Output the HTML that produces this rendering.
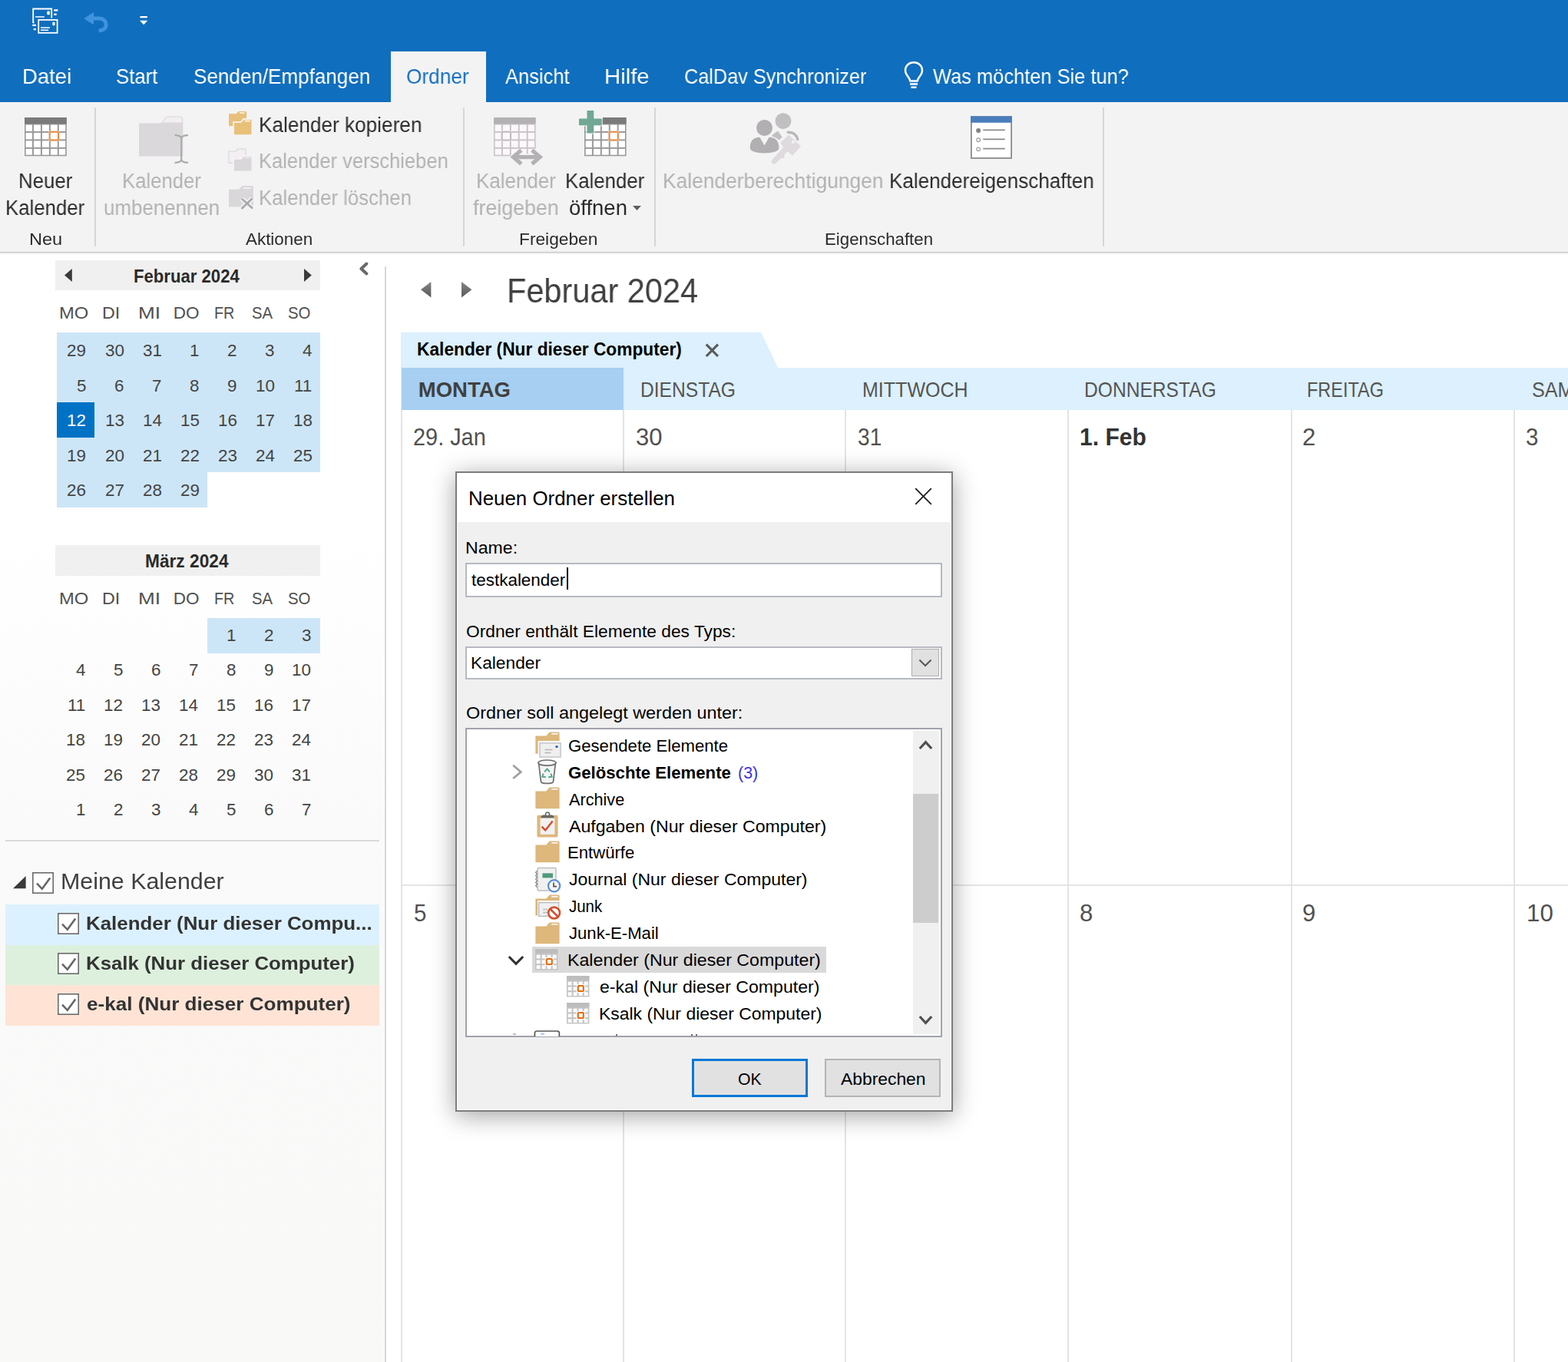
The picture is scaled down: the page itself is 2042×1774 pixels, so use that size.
<!DOCTYPE html>
<html lang="de">
<head>
<meta charset="utf-8">
<title>Kalender - Outlook</title>
<style>
html,body{margin:0;padding:0;}
body{width:2042px;height:1774px;overflow:hidden;position:relative;background:#fff;
 font-family:"Liberation Sans",sans-serif;-webkit-font-smoothing:antialiased;}
.b{position:absolute;display:block;overflow:visible;}
.t{position:absolute;white-space:nowrap;transform-origin:0 0;font-kerning:normal;}
.g{will-change:transform;}
</style>
</head>
<body>
<header id="titlebar" aria-label="Outlook Titelleiste und Registerkarten">
<div class="b" style="left:0px;top:0px;width:2042px;height:133px;background:#106EBE;"></div>
<svg class="b" style="left:42px;top:10px;" width="35" height="34" viewBox="0 0 35 34"><g fill="none" stroke="#fff" stroke-width="1.8"><path d="M2.6 19.4 H1.2 V1.5 H25.2 V13.6"/><rect x="8.2" y="15.9" width="24.4" height="16.9" fill="#106EBE"/></g><g fill="#fff"><rect x="19.3" y="4.6" width="3.5" height="4.6" rx="0.8"/><rect x="3.9" y="11.2" width="12" height="1.5"/><rect x="28.1" y="2.3" width="5.4" height="2.3" rx="0.6"/><rect x="28.1" y="7.6" width="3.6" height="2.3" rx="0.6"/><rect x="26.4" y="18.7" width="3.1" height="4.6" rx="0.8"/><rect x="10.9" y="25.3" width="12" height="1.5"/><rect x="10.9" y="28.5" width="10.2" height="1.5"/><rect x="0.3" y="21.7" width="4.6" height="2.3" rx="0.6"/><rect x="1.7" y="27" width="3.2" height="2.3" rx="0.6"/></g></svg>
<svg class="b" style="left:108.8px;top:15.6px;" width="32" height="27" viewBox="0 0 32 27"><path d="M0 8.2 L13 0 V5.2 L12.4 5.6 H19 C27.5 5.6 31.6 10.6 31.6 16.2 C31.6 22.6 26.6 26 19.6 26.2 V21.4 C24 21.2 26.6 19.6 26.6 16 C26.6 12.6 24 10.6 19 10.6 H12.6 L13 10.9 V16.2 Z" fill="#3F93DE"/></svg>
<svg class="b" style="left:181.7px;top:20.7px;" width="11" height="12" viewBox="0 0 11 12"><rect x="0.4" y="0" width="9.4" height="2.3" fill="#fff"/><path d="M0 5.8h10.2L5.1 11.3z" fill="#fff"/></svg>
<div class="b" style="left:508.5px;top:66.5px;width:124.3px;height:67px;background:#F3F3F3;"></div>
<span class="t g" style="left:29.13px;top:83.70px;font-size:28px;line-height:31px;color:#FFFFFF;transform:scaleX(0.9807);">Datei</span>
<span class="t g" style="left:150.64px;top:83.70px;font-size:28px;line-height:31px;color:#FFFFFF;transform:scaleX(0.9189);">Start</span>
<span class="t g" style="left:252.13px;top:83.70px;font-size:28px;line-height:31px;color:#FFFFFF;transform:scaleX(0.9300);">Senden/Empfangen</span>
<span class="t g" style="left:528.65px;top:83.70px;font-size:28px;line-height:31px;color:#1971C2;transform:scaleX(0.9379);">Ordner</span>
<span class="t g" style="left:657.74px;top:83.70px;font-size:28px;line-height:31px;color:#FFFFFF;transform:scaleX(0.9109);">Ansicht</span>
<span class="t g" style="left:786.98px;top:83.70px;font-size:28px;line-height:31px;color:#FFFFFF;transform:scaleX(1.0476);">Hilfe</span>
<span class="t g" style="left:891.34px;top:83.70px;font-size:28px;line-height:31px;color:#FFFFFF;transform:scaleX(0.9029);">CalDav Synchronizer</span>
<span class="t g" style="left:1215.07px;top:83.70px;font-size:28px;line-height:31px;color:#FFFFFF;transform:scaleX(0.9084);">Was möchten Sie tun?</span>
<svg class="b" style="left:1177px;top:80px;" width="26" height="36" viewBox="0 0 26 36"><g fill="none" stroke="#fff" stroke-width="2.5"><path d="M8.2 25.5 C8.2 21 2 18.5 2 11.5 C2 5.5 7 1.3 13 1.3 C19 1.3 24 5.5 24 11.5 C24 18.5 17.8 21 17.8 25.5 Z" stroke-linejoin="round"/><path d="M8 29.6h10M9.5 33.8h7"/></g></svg>
<div class="b" style="left:0px;top:133px;width:2042px;height:194.5px;background:#F3F3F3;"></div>
<div class="b" style="left:0px;top:327px;width:2042px;height:1px;background:#EBEBEB;"></div>
<div class="b" style="left:0px;top:328px;width:2042px;height:2px;background:#D6D6D6;"></div>
<div class="b" style="left:123px;top:140px;width:2px;height:181px;background:#D6D6D6;"></div>
<div class="b" style="left:603px;top:140px;width:2px;height:181px;background:#D6D6D6;"></div>
<div class="b" style="left:852px;top:140px;width:2px;height:181px;background:#D6D6D6;"></div>
<div class="b" style="left:1436px;top:140px;width:2px;height:181px;background:#D6D6D6;"></div>
<svg class="b" style="left:31.5px;top:152.9px;" width="54.8" height="50.3" viewBox="0 0 54.8 50.3"><rect x="0" y="0" width="54.8" height="50.3" fill="#9A9A9A"/><rect x="0" y="0" width="54.8" height="8.5" fill="#7A7A7A"/><rect x="1.60" y="9.50" width="8.36" height="8.45" fill="#FFFFFF"/><rect x="11.96" y="9.50" width="8.96" height="8.45" fill="#FFFFFF"/><rect x="22.92" y="9.50" width="8.96" height="8.45" fill="#FFFFFF"/><rect x="33.88" y="9.50" width="8.96" height="8.45" fill="#FFFFFF"/><rect x="44.84" y="9.50" width="8.36" height="8.45" fill="#FFFFFF"/><rect x="1.60" y="19.95" width="8.36" height="8.45" fill="#FFFFFF"/><rect x="11.96" y="19.95" width="8.96" height="8.45" fill="#FFFFFF"/><rect x="22.92" y="19.95" width="8.96" height="8.45" fill="#FFFFFF"/><rect x="33.88" y="19.95" width="8.96" height="8.45" fill="#FFFFFF"/><rect x="44.84" y="19.95" width="8.36" height="8.45" fill="#FFFFFF"/><rect x="1.60" y="30.40" width="8.36" height="8.45" fill="#FFFFFF"/><rect x="11.96" y="30.40" width="8.96" height="8.45" fill="#FFFFFF"/><rect x="22.92" y="30.40" width="8.96" height="8.45" fill="#FFFFFF"/><rect x="33.88" y="30.40" width="8.96" height="8.45" fill="#FFFFFF"/><rect x="44.84" y="30.40" width="8.36" height="8.45" fill="#FFFFFF"/><rect x="1.60" y="40.85" width="8.36" height="7.85" fill="#FFFFFF"/><rect x="11.96" y="40.85" width="8.96" height="7.85" fill="#FFFFFF"/><rect x="22.92" y="40.85" width="8.96" height="7.85" fill="#FFFFFF"/><rect x="33.88" y="40.85" width="8.96" height="7.85" fill="#FFFFFF"/><rect x="44.84" y="40.85" width="8.36" height="7.85" fill="#FFFFFF"/><rect x="31.68" y="17.75" width="13.36" height="12.85" fill="#FFFFFF"/><rect x="32.68" y="18.75" width="11.36" height="10.85" rx="1.5" fill="none" stroke="#E8873A" stroke-width="2"/></svg>
<span class="t g" style="left:23.97px;top:221.20px;font-size:27px;line-height:30px;color:#2B2B2B;transform:scaleX(0.9566);">Neuer</span>
<span class="t g" style="left:6.77px;top:256.20px;font-size:27px;line-height:30px;color:#2B2B2B;transform:scaleX(0.9551);">Kalender</span>
<span class="t g" style="left:37.86px;top:298.80px;font-size:22px;line-height:25px;color:#2B2B2B;transform:scaleX(1.0709);">Neu</span>
</header>
<nav id="ribbon" aria-label="Menüband Ordner">
<svg class="b" style="left:180.7px;top:150.6px;" width="57.3" height="52.4" viewBox="0 0 57.3 52.4"><path d="M0 9.4 H28.4 L36.4 0.4 H54 Q57.3 0.4 57.3 3.6 V52.4 H0 Z" fill="#DBD8DB"/><path d="M30.6 8.6 L37 1.6 H53.6 Q56 1.6 56 4 V8.6 Z" fill="#F3EEF3"/></svg>
<svg class="b" style="left:226.8px;top:174.6px;" width="18.5" height="38" viewBox="0 0 18.5 38"><g fill="none" stroke="#ABABAB" stroke-width="2.2"><path d="M9.2 3 V35"/><path d="M0.5 1.2 C5 1.2 8 2 9.2 4.5 C10.4 2 13.4 1.2 18 1.2"/><path d="M0.5 36.8 C5 36.8 8 36 9.2 33.5 C10.4 36 13.4 36.8 18 36.8"/></g></svg>
<span class="t g" style="left:159.08px;top:221.20px;font-size:27px;line-height:30px;color:#B2B2B2;transform:scaleX(0.9522);">Kalender</span>
<span class="t g" style="left:134.82px;top:256.20px;font-size:27px;line-height:30px;color:#B2B2B2;transform:scaleX(0.9593);">umbenennen</span>
<svg class="b" style="left:297.8px;top:145.4px;" width="23.1" height="19.2" viewBox="0 0 23.1 19.2"><path d="M0 3.26 H9.54 L12.47 0 H21.60 Q23.10 0 23.10 1.5 V19.20 H0 Z" fill="#E9C07A"/><rect x="13.67" y="1.37" width="7.03" height="1.37" rx="0.8" fill="#FFFFFF" opacity="0.85"/></svg>
<svg class="b" style="left:304.2px;top:154.7px;" width="24.4" height="21.2" viewBox="0 0 24.4 21.2"><path d="M0 4.03 H9.55 L13.18 0 H22.90 Q24.40 0 24.40 1.5 V21.20 H0 Z" fill="#E9C07A" stroke="#F3F3F3" stroke-width="1.8"/><rect x="14.38" y="1.69" width="7.62" height="1.69" rx="0.8" fill="#FFFFFF" opacity="0.85"/></svg>
<span class="t g" style="left:336.64px;top:147.60px;font-size:27px;line-height:30px;color:#2B2B2B;transform:scaleX(0.9694);">Kalender kopieren</span>
<svg class="b" style="left:298.4px;top:193.6px;" width="22.2" height="18.2" viewBox="0 0 22.2 18.2"><path d="M0 3.09 H9.20 L11.99 0 H20.70 Q22.20 0 22.20 1.5 V18.20 H0 Z" fill="#F4EFF4" stroke="#DEDADE" stroke-width="1.4"/></svg>
<svg class="b" style="left:304.2px;top:202.5px;" width="24.4" height="20.4" viewBox="0 0 24.4 20.4"><path d="M0 3.88 H9.69 L13.18 0 H22.90 Q24.40 0 24.40 1.5 V20.40 H0 Z" fill="#DAD7DA" stroke="#F3F3F3" stroke-width="1.8"/><rect x="14.38" y="1.63" width="7.62" height="1.63" rx="0.8" fill="#F1EDF1" opacity="0.85"/></svg>
<span class="t g" style="left:336.70px;top:195.00px;font-size:27px;line-height:30px;color:#B2B2B2;transform:scaleX(0.9446);">Kalender verschieben</span>
<svg class="b" style="left:297.8px;top:242.2px;" width="31.9" height="27.6" viewBox="0 0 31.9 27.6"><path d="M0 4.69 H13.00 L17.23 0 H30.40 Q31.90 0 31.90 1.5 V27.60 H0 Z" fill="#DAD7DA"/><rect x="18.43" y="1.97" width="11.07" height="1.97" rx="0.8" fill="#F4F0F4" opacity="0.85"/></svg>
<svg class="b" style="left:312.6px;top:257px;" width="18" height="16.5" viewBox="0 0 18 16.5"><path d="M2 2 L16 14.5 M15.5 1.5 L1.5 15" fill="none" stroke="#F3F3F3" stroke-width="6"/><path d="M2 2 L16 14.5 M15.5 1.5 L1.5 15" fill="none" stroke="#A9A8AA" stroke-width="2.7"/></svg>
<span class="t g" style="left:336.68px;top:242.50px;font-size:27px;line-height:30px;color:#B2B2B2;transform:scaleX(0.9535);">Kalender löschen</span>
<span class="t g" style="left:319.64px;top:298.80px;font-size:22px;line-height:25px;color:#2B2B2B;transform:scaleX(1.0184);">Aktionen</span>
<svg class="b" style="left:643.4px;top:152.9px;" width="54.6" height="50.3" viewBox="0 0 54.6 50.3"><rect x="0" y="0" width="54.6" height="50.3" fill="#C9C6C9"/><rect x="0" y="0" width="54.6" height="8.5" fill="#B4B1B4"/><rect x="1.60" y="9.50" width="8.32" height="8.45" fill="#FBF7FB"/><rect x="11.92" y="9.50" width="8.92" height="8.45" fill="#FBF7FB"/><rect x="22.84" y="9.50" width="8.92" height="8.45" fill="#FBF7FB"/><rect x="33.76" y="9.50" width="8.92" height="8.45" fill="#FBF7FB"/><rect x="44.68" y="9.50" width="8.32" height="8.45" fill="#FBF7FB"/><rect x="1.60" y="19.95" width="8.32" height="8.45" fill="#FBF7FB"/><rect x="11.92" y="19.95" width="8.92" height="8.45" fill="#FBF7FB"/><rect x="22.84" y="19.95" width="8.92" height="8.45" fill="#FBF7FB"/><rect x="33.76" y="19.95" width="8.92" height="8.45" fill="#FBF7FB"/><rect x="44.68" y="19.95" width="8.32" height="8.45" fill="#FBF7FB"/><rect x="1.60" y="30.40" width="8.32" height="8.45" fill="#FBF7FB"/><rect x="11.92" y="30.40" width="8.92" height="8.45" fill="#FBF7FB"/><rect x="22.84" y="30.40" width="8.92" height="8.45" fill="#FBF7FB"/><rect x="33.76" y="30.40" width="8.92" height="8.45" fill="#FBF7FB"/><rect x="44.68" y="30.40" width="8.32" height="8.45" fill="#FBF7FB"/><rect x="1.60" y="40.85" width="8.32" height="7.85" fill="#FBF7FB"/><rect x="11.92" y="40.85" width="8.92" height="7.85" fill="#FBF7FB"/><rect x="22.84" y="40.85" width="8.92" height="7.85" fill="#FBF7FB"/><rect x="33.76" y="40.85" width="8.92" height="7.85" fill="#FBF7FB"/><rect x="44.68" y="40.85" width="8.32" height="7.85" fill="#FBF7FB"/><rect x="9.72" y="17.75" width="13.32" height="12.85" fill="#FBF7FB"/><rect x="10.72" y="18.75" width="11.32" height="10.85" rx="1.5" fill="none" stroke="#BDBABD" stroke-width="2"/></svg>
<svg class="b" style="left:664.9px;top:194.5px;" width="41.6" height="19.2" viewBox="0 0 41.6 19.2"><g fill="none" stroke="#F3F3F3" stroke-width="8.6"><path d="M6 9.6H35.6M13.6 1.6L4.4 9.6L13.6 17.6M28 1.6L37.2 9.6L28 17.6"/></g><g fill="none" stroke="#B3B1B3" stroke-width="5.2"><path d="M6 9.6H35.6"/><path d="M13.8 0.6L3.4 9.6L13.8 18.6" stroke-linejoin="miter"/><path d="M27.8 0.6L38.2 9.6L27.8 18.6" stroke-linejoin="miter"/></g></svg>
<span class="t g" style="left:619.56px;top:221.20px;font-size:27px;line-height:30px;color:#B2B2B2;transform:scaleX(0.9617);">Kalender</span>
<span class="t g" style="left:615.90px;top:256.20px;font-size:27px;line-height:30px;color:#B2B2B2;transform:scaleX(0.9928);">freigeben</span>
<svg class="b" style="left:760.6px;top:152.9px;" width="54.6" height="50.3" viewBox="0 0 54.6 50.3"><rect x="0" y="0" width="54.6" height="50.3" fill="#9A9A9A"/><rect x="0" y="0" width="54.6" height="8.5" fill="#7A7A7A"/><rect x="1.60" y="9.50" width="8.32" height="8.45" fill="#FFFFFF"/><rect x="11.92" y="9.50" width="8.92" height="8.45" fill="#FFFFFF"/><rect x="22.84" y="9.50" width="8.92" height="8.45" fill="#FFFFFF"/><rect x="33.76" y="9.50" width="8.92" height="8.45" fill="#FFFFFF"/><rect x="44.68" y="9.50" width="8.32" height="8.45" fill="#FFFFFF"/><rect x="1.60" y="19.95" width="8.32" height="8.45" fill="#FFFFFF"/><rect x="11.92" y="19.95" width="8.92" height="8.45" fill="#FFFFFF"/><rect x="22.84" y="19.95" width="8.92" height="8.45" fill="#FFFFFF"/><rect x="33.76" y="19.95" width="8.92" height="8.45" fill="#FFFFFF"/><rect x="44.68" y="19.95" width="8.32" height="8.45" fill="#FFFFFF"/><rect x="1.60" y="30.40" width="8.32" height="8.45" fill="#FFFFFF"/><rect x="11.92" y="30.40" width="8.92" height="8.45" fill="#FFFFFF"/><rect x="22.84" y="30.40" width="8.92" height="8.45" fill="#FFFFFF"/><rect x="33.76" y="30.40" width="8.92" height="8.45" fill="#FFFFFF"/><rect x="44.68" y="30.40" width="8.32" height="8.45" fill="#FFFFFF"/><rect x="1.60" y="40.85" width="8.32" height="7.85" fill="#FFFFFF"/><rect x="11.92" y="40.85" width="8.92" height="7.85" fill="#FFFFFF"/><rect x="22.84" y="40.85" width="8.92" height="7.85" fill="#FFFFFF"/><rect x="33.76" y="40.85" width="8.92" height="7.85" fill="#FFFFFF"/><rect x="44.68" y="40.85" width="8.32" height="7.85" fill="#FFFFFF"/><rect x="31.56" y="17.75" width="13.32" height="12.85" fill="#FFFFFF"/><rect x="32.56" y="18.75" width="11.32" height="10.85" rx="1.5" fill="none" stroke="#E8873A" stroke-width="2"/></svg>
<div class="b" style="left:758px;top:151px;width:27px;height:4px;background:#F3F3F3;"></div>
<svg class="b" style="left:753.5px;top:143.8px;" width="29.7" height="29.6" viewBox="0 0 29.7 29.6"><path d="M10.5 0 H19.3 V10.4 H29.7 V19.2 H19.3 V29.6 H10.5 V19.2 H0 V10.4 H10.5 Z" fill="#70A894" stroke="#F3F3F3" stroke-width="2" paint-order="stroke"/></svg>
<span class="t g" style="left:735.77px;top:221.20px;font-size:27px;line-height:30px;color:#2B2B2B;transform:scaleX(0.9560);">Kalender</span>
<span class="t g" style="left:741.43px;top:256.20px;font-size:27px;line-height:30px;color:#2B2B2B;transform:scaleX(1.0183);">öffnen</span>
<svg class="b" style="left:823.6px;top:268.2px;" width="11" height="6" viewBox="0 0 11 6"><path d="M0 0h11L5.5 6z" fill="#5E5E5E"/></svg>
<span class="t g" style="left:676.12px;top:298.80px;font-size:22px;line-height:25px;color:#2B2B2B;transform:scaleX(1.0337);">Freigeben</span>
<svg class="b" style="left:976px;top:146.9px;" width="68" height="68" viewBox="0 0 68 68"><circle cx="44" cy="10.7" r="10.4" fill="#C1BFC1"/><path d="M28.8 30.4 Q32.5 25.2 37.6 24 L42.6 31.6 L38.6 35.6 Q34.6 31.2 28.8 30.4 Z" fill="#C1BFC1"/><path d="M50.2 25.2 Q60.4 25 62.8 34.6" fill="none" stroke="#B9B7B9" stroke-width="3.4" stroke-linecap="round"/><circle cx="19.5" cy="19.5" r="10.5" fill="#B1AFB1"/><path d="M0.8 46 C0.8 36 5 32.4 13.4 31.8 L19.5 42.6 L25.6 31.8 C34 32.4 38.4 36 38.4 46 C38.4 54.6 0.8 54.6 0.8 46 Z" fill="#B1AFB1"/><g fill="#DEDADE" stroke="#F3F3F3" stroke-width="1.4" paint-order="stroke"><path d="M51.1 28.6 L67 43.5 L56 55.5 L49.6 50.2 L44.8 55.2 L46.2 57.2 L43.6 59.8 L41.6 58.6 L34.4 65.8 Q31.2 67.6 29.4 65.6 Q27.8 63.4 30 60.4 L44.4 44.8 L40.2 39.2 Z"/></g><rect x="55.2" y="36.3" width="3.6" height="3.6" fill="#F4F1F4" transform="rotate(45 57 38.1)"/></svg>
<span class="t g" style="left:863.12px;top:221.20px;font-size:27px;line-height:30px;color:#B2B2B2;transform:scaleX(0.9769);">Kalenderberechtigungen</span>
<svg class="b" style="left:1263.6px;top:150.6px;overflow:hidden;" width="54.0" height="56.2" viewBox="0 0 54.8 56.4"><rect x="0.9" y="0.9" width="53" height="54.6" fill="#fff" stroke="#8A8A8A" stroke-width="1.8"/><rect x="0" y="0" width="54.8" height="8.6" fill="#4A7EBB"/><g stroke="#8A8A8A" stroke-width="1.7" fill="none"><path d="M16.5 18.3h29M16.5 30.6h29M16.5 42.9h29"/><circle cx="10.3" cy="19" r="2.3" fill="#7E7E7E"/><circle cx="10.3" cy="31.4" r="2.4" stroke-width="1.1" stroke="#9A9A9A"/><circle cx="10.3" cy="43.7" r="2.4" stroke-width="1.1" stroke="#9A9A9A"/></g></svg>
<span class="t g" style="left:1157.55px;top:221.20px;font-size:27px;line-height:30px;color:#2B2B2B;transform:scaleX(0.9655);">Kalendereigenschaften</span>
<span class="t g" style="left:1073.96px;top:298.80px;font-size:22px;line-height:25px;color:#2B2B2B;transform:scaleX(1.0115);">Eigenschaften</span>
</nav>
<aside id="navpane" aria-label="Datumsnavigator und Kalenderliste">
<div class="b" style="left:0px;top:330px;width:501px;height:1444px;background:linear-gradient(#FFFFFF 0%,#FFFFFF 25%,#FAFAFA 52%,#F9F9F8 100%);"></div>
<div class="b" style="left:501px;top:347px;width:2px;height:1427px;background:#D8D8D8;"></div>
<svg class="b" style="left:467px;top:341px;" width="13" height="18" viewBox="0 0 13 18"><path d="M10.4 2.6 L3.4 9 L10.4 15.4" fill="none" stroke="#6A6A6A" stroke-width="4.1" stroke-linecap="round" stroke-linejoin="round"/></svg>
<div class="b" style="left:72px;top:338.5px;width:345px;height:39.8px;background:#F0F0F0;"></div>
<span class="t" style="left:173.71px;top:346.90px;font-size:23.2px;line-height:26px;color:#2A2A2A;font-weight:700;transform:scaleX(0.9542);">Februar 2024</span>
<svg class="b" style="left:83.8px;top:350.1px;" width="9.8" height="17" viewBox="0 0 9.8 17"><path d="M9.8 0v17L0 8.5z" fill="#3A3A3A"/></svg>
<svg class="b" style="left:395.7px;top:350.1px;" width="9.8" height="17" viewBox="0 0 9.8 17"><path d="M0 0v17l9.8-8.5z" fill="#3A3A3A"/></svg>
<span class="t" style="left:76.74px;top:395.40px;font-size:22.5px;line-height:25px;color:#505050;transform:scaleX(1.0571);">MO</span>
<span class="t" style="left:132.78px;top:395.40px;font-size:22.5px;line-height:25px;color:#505050;transform:scaleX(1.0343);">DI</span>
<span class="t" style="left:179.85px;top:395.40px;font-size:22.5px;line-height:25px;color:#505050;transform:scaleX(1.1598);">MI</span>
<span class="t" style="left:225.75px;top:395.40px;font-size:22.5px;line-height:25px;color:#505050;">DO</span>
<span class="t" style="left:278.77px;top:395.40px;font-size:22.5px;line-height:25px;color:#505050;transform:scaleX(0.8796);">FR</span>
<span class="t" style="left:327.59px;top:395.40px;font-size:22.5px;line-height:25px;color:#505050;transform:scaleX(0.9010);">SA</span>
<span class="t" style="left:375.08px;top:395.40px;font-size:22.5px;line-height:25px;color:#505050;transform:scaleX(0.9070);">SO</span>
<div class="b" style="left:73.7px;top:433.1px;width:343.3px;height:46.1px;background:#CDE6F7;"></div>
<div class="b" style="left:73.7px;top:478.5px;width:343.3px;height:46.1px;background:#CDE6F7;"></div>
<div class="b" style="left:73.7px;top:523.9px;width:343.3px;height:46.1px;background:#CDE6F7;"></div>
<div class="b" style="left:73.7px;top:569.3px;width:343.3px;height:46.1px;background:#CDE6F7;"></div>
<div class="b" style="left:73.7px;top:614.7px;width:196.2px;height:46.1px;background:#CDE6F7;"></div>
<div class="b" style="left:73.7px;top:523.9px;width:49.0px;height:46.0px;background:#0072C6;"></div>
<span class="t" style="left:87.47px;top:444.30px;font-size:22.5px;line-height:25px;color:#444444;transform:scaleX(0.9940);">29</span>
<span class="t" style="left:136.52px;top:444.30px;font-size:22.5px;line-height:25px;color:#444444;transform:scaleX(0.9940);">30</span>
<span class="t" style="left:185.57px;top:444.30px;font-size:22.5px;line-height:25px;color:#444444;transform:scaleX(0.9940);">31</span>
<span class="t" style="left:247.06px;top:444.30px;font-size:22.5px;line-height:25px;color:#444444;transform:scaleX(0.9940);">1</span>
<span class="t" style="left:296.11px;top:444.30px;font-size:22.5px;line-height:25px;color:#444444;transform:scaleX(0.9940);">2</span>
<span class="t" style="left:345.16px;top:444.30px;font-size:22.5px;line-height:25px;color:#444444;transform:scaleX(0.9940);">3</span>
<span class="t" style="left:394.21px;top:444.30px;font-size:22.5px;line-height:25px;color:#444444;transform:scaleX(0.9940);">4</span>
<span class="t" style="left:99.91px;top:489.70px;font-size:22.5px;line-height:25px;color:#444444;transform:scaleX(0.9940);">5</span>
<span class="t" style="left:148.96px;top:489.70px;font-size:22.5px;line-height:25px;color:#444444;transform:scaleX(0.9940);">6</span>
<span class="t" style="left:198.01px;top:489.70px;font-size:22.5px;line-height:25px;color:#444444;transform:scaleX(0.9940);">7</span>
<span class="t" style="left:247.06px;top:489.70px;font-size:22.5px;line-height:25px;color:#444444;transform:scaleX(0.9940);">8</span>
<span class="t" style="left:296.11px;top:489.70px;font-size:22.5px;line-height:25px;color:#444444;transform:scaleX(0.9940);">9</span>
<span class="t" style="left:332.72px;top:489.70px;font-size:22.5px;line-height:25px;color:#444444;transform:scaleX(0.9940);">10</span>
<span class="t" style="left:383.43px;top:489.70px;font-size:22.5px;line-height:25px;color:#444444;transform:scaleX(0.9940);">11</span>
<span class="t" style="left:87.47px;top:535.10px;font-size:22.5px;line-height:25px;color:#FFFFFF;transform:scaleX(0.9940);">12</span>
<span class="t" style="left:136.52px;top:535.10px;font-size:22.5px;line-height:25px;color:#444444;transform:scaleX(0.9940);">13</span>
<span class="t" style="left:185.57px;top:535.10px;font-size:22.5px;line-height:25px;color:#444444;transform:scaleX(0.9940);">14</span>
<span class="t" style="left:234.62px;top:535.10px;font-size:22.5px;line-height:25px;color:#444444;transform:scaleX(0.9940);">15</span>
<span class="t" style="left:283.67px;top:535.10px;font-size:22.5px;line-height:25px;color:#444444;transform:scaleX(0.9940);">16</span>
<span class="t" style="left:332.72px;top:535.10px;font-size:22.5px;line-height:25px;color:#444444;transform:scaleX(0.9940);">17</span>
<span class="t" style="left:381.77px;top:535.10px;font-size:22.5px;line-height:25px;color:#444444;transform:scaleX(0.9940);">18</span>
<span class="t" style="left:87.47px;top:580.50px;font-size:22.5px;line-height:25px;color:#444444;transform:scaleX(0.9940);">19</span>
<span class="t" style="left:136.52px;top:580.50px;font-size:22.5px;line-height:25px;color:#444444;transform:scaleX(0.9940);">20</span>
<span class="t" style="left:185.57px;top:580.50px;font-size:22.5px;line-height:25px;color:#444444;transform:scaleX(0.9940);">21</span>
<span class="t" style="left:234.62px;top:580.50px;font-size:22.5px;line-height:25px;color:#444444;transform:scaleX(0.9940);">22</span>
<span class="t" style="left:283.67px;top:580.50px;font-size:22.5px;line-height:25px;color:#444444;transform:scaleX(0.9940);">23</span>
<span class="t" style="left:332.72px;top:580.50px;font-size:22.5px;line-height:25px;color:#444444;transform:scaleX(0.9940);">24</span>
<span class="t" style="left:381.77px;top:580.50px;font-size:22.5px;line-height:25px;color:#444444;transform:scaleX(0.9940);">25</span>
<span class="t" style="left:87.47px;top:625.90px;font-size:22.5px;line-height:25px;color:#444444;transform:scaleX(0.9940);">26</span>
<span class="t" style="left:136.52px;top:625.90px;font-size:22.5px;line-height:25px;color:#444444;transform:scaleX(0.9940);">27</span>
<span class="t" style="left:185.57px;top:625.90px;font-size:22.5px;line-height:25px;color:#444444;transform:scaleX(0.9940);">28</span>
<span class="t" style="left:234.62px;top:625.90px;font-size:22.5px;line-height:25px;color:#444444;transform:scaleX(0.9940);">29</span>
<div class="b" style="left:72px;top:710.0px;width:345px;height:39.8px;background:#F0F0F0;"></div>
<span class="t" style="left:188.97px;top:718.40px;font-size:23.2px;line-height:26px;color:#2A2A2A;font-weight:700;transform:scaleX(0.9788);">März 2024</span>
<span class="t" style="left:76.74px;top:766.90px;font-size:22.5px;line-height:25px;color:#505050;transform:scaleX(1.0571);">MO</span>
<span class="t" style="left:132.78px;top:766.90px;font-size:22.5px;line-height:25px;color:#505050;transform:scaleX(1.0343);">DI</span>
<span class="t" style="left:179.85px;top:766.90px;font-size:22.5px;line-height:25px;color:#505050;transform:scaleX(1.1598);">MI</span>
<span class="t" style="left:225.75px;top:766.90px;font-size:22.5px;line-height:25px;color:#505050;">DO</span>
<span class="t" style="left:278.77px;top:766.90px;font-size:22.5px;line-height:25px;color:#505050;transform:scaleX(0.8796);">FR</span>
<span class="t" style="left:327.59px;top:766.90px;font-size:22.5px;line-height:25px;color:#505050;transform:scaleX(0.9010);">SA</span>
<span class="t" style="left:375.08px;top:766.90px;font-size:22.5px;line-height:25px;color:#505050;transform:scaleX(0.9070);">SO</span>
<div class="b" style="left:269.9px;top:804.6px;width:147.1px;height:46.1px;background:#CDE6F7;"></div>
<span class="t" style="left:294.81px;top:814.90px;font-size:22.5px;line-height:25px;color:#444444;transform:scaleX(0.9940);">1</span>
<span class="t" style="left:343.86px;top:814.90px;font-size:22.5px;line-height:25px;color:#444444;transform:scaleX(0.9940);">2</span>
<span class="t" style="left:392.91px;top:814.90px;font-size:22.5px;line-height:25px;color:#444444;transform:scaleX(0.9940);">3</span>
<span class="t" style="left:98.61px;top:860.30px;font-size:22.5px;line-height:25px;color:#444444;transform:scaleX(0.9940);">4</span>
<span class="t" style="left:147.66px;top:860.30px;font-size:22.5px;line-height:25px;color:#444444;transform:scaleX(0.9940);">5</span>
<span class="t" style="left:196.71px;top:860.30px;font-size:22.5px;line-height:25px;color:#444444;transform:scaleX(0.9940);">6</span>
<span class="t" style="left:245.76px;top:860.30px;font-size:22.5px;line-height:25px;color:#444444;transform:scaleX(0.9940);">7</span>
<span class="t" style="left:294.81px;top:860.30px;font-size:22.5px;line-height:25px;color:#444444;transform:scaleX(0.9940);">8</span>
<span class="t" style="left:343.86px;top:860.30px;font-size:22.5px;line-height:25px;color:#444444;transform:scaleX(0.9940);">9</span>
<span class="t" style="left:380.47px;top:860.30px;font-size:22.5px;line-height:25px;color:#444444;transform:scaleX(0.9940);">10</span>
<span class="t" style="left:87.83px;top:905.70px;font-size:22.5px;line-height:25px;color:#444444;transform:scaleX(0.9940);">11</span>
<span class="t" style="left:135.22px;top:905.70px;font-size:22.5px;line-height:25px;color:#444444;transform:scaleX(0.9940);">12</span>
<span class="t" style="left:184.27px;top:905.70px;font-size:22.5px;line-height:25px;color:#444444;transform:scaleX(0.9940);">13</span>
<span class="t" style="left:233.32px;top:905.70px;font-size:22.5px;line-height:25px;color:#444444;transform:scaleX(0.9940);">14</span>
<span class="t" style="left:282.37px;top:905.70px;font-size:22.5px;line-height:25px;color:#444444;transform:scaleX(0.9940);">15</span>
<span class="t" style="left:331.42px;top:905.70px;font-size:22.5px;line-height:25px;color:#444444;transform:scaleX(0.9940);">16</span>
<span class="t" style="left:380.47px;top:905.70px;font-size:22.5px;line-height:25px;color:#444444;transform:scaleX(0.9940);">17</span>
<span class="t" style="left:86.17px;top:951.10px;font-size:22.5px;line-height:25px;color:#444444;transform:scaleX(0.9940);">18</span>
<span class="t" style="left:135.22px;top:951.10px;font-size:22.5px;line-height:25px;color:#444444;transform:scaleX(0.9940);">19</span>
<span class="t" style="left:184.27px;top:951.10px;font-size:22.5px;line-height:25px;color:#444444;transform:scaleX(0.9940);">20</span>
<span class="t" style="left:233.32px;top:951.10px;font-size:22.5px;line-height:25px;color:#444444;transform:scaleX(0.9940);">21</span>
<span class="t" style="left:282.37px;top:951.10px;font-size:22.5px;line-height:25px;color:#444444;transform:scaleX(0.9940);">22</span>
<span class="t" style="left:331.42px;top:951.10px;font-size:22.5px;line-height:25px;color:#444444;transform:scaleX(0.9940);">23</span>
<span class="t" style="left:380.47px;top:951.10px;font-size:22.5px;line-height:25px;color:#444444;transform:scaleX(0.9940);">24</span>
<span class="t" style="left:86.17px;top:996.50px;font-size:22.5px;line-height:25px;color:#444444;transform:scaleX(0.9940);">25</span>
<span class="t" style="left:135.22px;top:996.50px;font-size:22.5px;line-height:25px;color:#444444;transform:scaleX(0.9940);">26</span>
<span class="t" style="left:184.27px;top:996.50px;font-size:22.5px;line-height:25px;color:#444444;transform:scaleX(0.9940);">27</span>
<span class="t" style="left:233.32px;top:996.50px;font-size:22.5px;line-height:25px;color:#444444;transform:scaleX(0.9940);">28</span>
<span class="t" style="left:282.37px;top:996.50px;font-size:22.5px;line-height:25px;color:#444444;transform:scaleX(0.9940);">29</span>
<span class="t" style="left:331.42px;top:996.50px;font-size:22.5px;line-height:25px;color:#444444;transform:scaleX(0.9940);">30</span>
<span class="t" style="left:380.47px;top:996.50px;font-size:22.5px;line-height:25px;color:#444444;transform:scaleX(0.9940);">31</span>
<span class="t" style="left:98.61px;top:1041.90px;font-size:22.5px;line-height:25px;color:#444444;transform:scaleX(0.9940);">1</span>
<span class="t" style="left:147.66px;top:1041.90px;font-size:22.5px;line-height:25px;color:#444444;transform:scaleX(0.9940);">2</span>
<span class="t" style="left:196.71px;top:1041.90px;font-size:22.5px;line-height:25px;color:#444444;transform:scaleX(0.9940);">3</span>
<span class="t" style="left:245.76px;top:1041.90px;font-size:22.5px;line-height:25px;color:#444444;transform:scaleX(0.9940);">4</span>
<span class="t" style="left:294.81px;top:1041.90px;font-size:22.5px;line-height:25px;color:#444444;transform:scaleX(0.9940);">5</span>
<span class="t" style="left:343.86px;top:1041.90px;font-size:22.5px;line-height:25px;color:#444444;transform:scaleX(0.9940);">6</span>
<span class="t" style="left:392.91px;top:1041.90px;font-size:22.5px;line-height:25px;color:#444444;transform:scaleX(0.9940);">7</span>
<div class="b" style="left:7px;top:1094px;width:487px;height:2px;background:#DADADA;"></div>
<svg class="b" style="left:17px;top:1141px;" width="17" height="16.2" viewBox="0 0 17 16.2"><path d="M16.6 0V16.2H0z" fill="#3A3A3A"/></svg>
<svg class="b" style="left:42.1px;top:1135.7px;" width="28" height="28" viewBox="0 0 28 28"><rect x="0.8" y="0.8" width="26.4" height="26.4" fill="#fff" stroke="#6B6B6B" stroke-width="1.6"/><path d="M6 14.6 L12.8 21.8 L23.2 7.4" fill="none" stroke="#666" stroke-width="2.6"/></svg>
<span class="t g" style="left:78.69px;top:1131.20px;font-size:30px;line-height:33px;color:#404040;transform:scaleX(1.0124);">Meine Kalender</span>
<div class="b" style="left:7px;top:1178px;width:487px;height:53px;background:#DCF1FF;"></div>
<svg class="b" style="left:75.4px;top:1189.0px;" width="28" height="28" viewBox="0 0 28 28"><rect x="0.8" y="0.8" width="26.4" height="26.4" fill="#fff" stroke="#6B6B6B" stroke-width="1.6"/><path d="M6 14.6 L12.8 21.8 L23.2 7.4" fill="none" stroke="#666" stroke-width="2.6"/></svg>
<span class="t g" style="left:112.35px;top:1189.00px;font-size:24px;line-height:27px;color:#333333;font-weight:700;transform:scaleX(1.0790);">Kalender (Nur dieser Compu...</span>
<div class="b" style="left:7px;top:1231px;width:487px;height:52px;background:#DDF0DD;"></div>
<svg class="b" style="left:75.4px;top:1241.4px;" width="28" height="28" viewBox="0 0 28 28"><rect x="0.8" y="0.8" width="26.4" height="26.4" fill="#fff" stroke="#6B6B6B" stroke-width="1.6"/><path d="M6 14.6 L12.8 21.8 L23.2 7.4" fill="none" stroke="#666" stroke-width="2.6"/></svg>
<span class="t g" style="left:112.36px;top:1241.40px;font-size:24px;line-height:27px;color:#333333;font-weight:700;transform:scaleX(1.0751);">Ksalk (Nur dieser Computer)</span>
<div class="b" style="left:7px;top:1283px;width:487px;height:52.5px;background:#FFE4D6;"></div>
<svg class="b" style="left:75.4px;top:1293.8px;" width="28" height="28" viewBox="0 0 28 28"><rect x="0.8" y="0.8" width="26.4" height="26.4" fill="#fff" stroke="#6B6B6B" stroke-width="1.6"/><path d="M6 14.6 L12.8 21.8 L23.2 7.4" fill="none" stroke="#666" stroke-width="2.6"/></svg>
<span class="t g" style="left:113.06px;top:1293.80px;font-size:24px;line-height:27px;color:#333333;font-weight:700;transform:scaleX(1.0869);">e-kal (Nur dieser Computer)</span>
</aside>
<main id="calendar" aria-label="Monatsansicht">
<svg class="b" style="left:548.2px;top:367.4px;" width="13.4" height="20.6" viewBox="0 0 13.4 20.6"><linearGradient id="ga" x1="0" y1="0" x2="0" y2="1"><stop offset="0" stop-color="#868686"/><stop offset="1" stop-color="#585858"/></linearGradient><path d="M13.4 0V20.6L0 10.3z" fill="url(#ga)"/></svg>
<svg class="b" style="left:600.6px;top:367.4px;" width="13.4" height="20.6" viewBox="0 0 13.4 20.6"><path d="M0 0V20.6L13.4 10.3z" fill="url(#ga)"/></svg>
<span class="t g" style="left:660.38px;top:354.20px;font-size:44px;line-height:49px;color:#404040;transform:scaleX(0.9426);">Februar 2024</span>
<svg class="b" style="left:522.4px;top:433.3px;" width="492" height="46" viewBox="0 0 492 46"><path d="M0 0H469.2L490.8 45.6V46H0z" fill="#DCF0FD"/></svg>
<span class="t" style="left:542.97px;top:441.80px;font-size:23.5px;line-height:26px;color:#000;font-weight:700;transform:scaleX(0.9674);">Kalender (Nur dieser Computer)</span>
<svg class="b" style="left:918px;top:447px;" width="19" height="18.4" viewBox="0 0 19 18.4"><path d="M1.8 1.6L17 17M17 1.6L1.8 17" fill="none" stroke="#5A5A5A" stroke-width="3.1"/></svg>
<div class="b" style="left:522.4px;top:478.7px;width:1520px;height:55.6px;background:#DCF0FD;"></div>
<div class="b" style="left:523.4px;top:478.7px;width:288.2px;height:55.6px;background:#A6CFF2;"></div>
<span class="t" style="left:544.75px;top:492.00px;font-size:27.5px;line-height:31px;color:#404040;font-weight:700;">MONTAG</span>
<span class="t" style="left:833.97px;top:491.80px;font-size:27.5px;line-height:31px;color:#555;transform:scaleX(0.8949);">DIENSTAG</span>
<span class="t" style="left:1122.73px;top:491.80px;font-size:27.5px;line-height:31px;color:#555;transform:scaleX(0.9106);">MITTWOCH</span>
<span class="t" style="left:1411.97px;top:491.80px;font-size:27.5px;line-height:31px;color:#555;transform:scaleX(0.8946);">DONNERSTAG</span>
<span class="t" style="left:1702.36px;top:491.80px;font-size:27.5px;line-height:31px;color:#555;transform:scaleX(0.8536);">FREITAG</span>
<span class="t" style="left:1994.87px;top:491.80px;font-size:27.5px;line-height:31px;color:#555;transform:scaleX(0.9163);">SAMSTAG</span>
<div class="b" style="left:522px;top:534px;width:2px;height:1240px;background:#E4E4E4;"></div>
<div class="b" style="left:811px;top:534px;width:2px;height:1240px;background:#E4E4E4;"></div>
<div class="b" style="left:1100px;top:534px;width:2px;height:1240px;background:#E4E4E4;"></div>
<div class="b" style="left:1390px;top:534px;width:2px;height:1240px;background:#E4E4E4;"></div>
<div class="b" style="left:1681px;top:534px;width:2px;height:1240px;background:#E4E4E4;"></div>
<div class="b" style="left:1971px;top:534px;width:2px;height:1240px;background:#E4E4E4;"></div>
<div class="b" style="left:523px;top:1152px;width:1519px;height:2px;background:#E4E4E4;"></div>
<span class="t" style="left:538.16px;top:551.30px;font-size:32px;line-height:36px;color:#505050;transform:scaleX(0.9027);">29. Jan</span>
<span class="t" style="left:827.84px;top:551.30px;font-size:32px;line-height:36px;color:#505050;transform:scaleX(0.9692);">30</span>
<span class="t" style="left:1116.85px;top:551.30px;font-size:32px;line-height:36px;color:#505050;transform:scaleX(0.8780);">31</span>
<span class="t" style="left:1406.22px;top:551.30px;font-size:32px;line-height:36px;color:#333;font-weight:700;transform:scaleX(0.9395);">1. Feb</span>
<span class="t" style="left:1695.84px;top:551.30px;font-size:32px;line-height:36px;color:#505050;transform:scaleX(0.9753);">2</span>
<span class="t" style="left:1987.09px;top:551.30px;font-size:32px;line-height:36px;color:#505050;transform:scaleX(0.9211);">3</span>
<span class="t" style="left:539.02px;top:1171.40px;font-size:32px;line-height:36px;color:#505050;transform:scaleX(0.9211);">5</span>
<span class="t" style="left:827.62px;top:1171.40px;font-size:32px;line-height:36px;color:#505050;transform:scaleX(0.9865);">6</span>
<span class="t" style="left:1117.02px;top:1171.40px;font-size:32px;line-height:36px;color:#505050;transform:scaleX(0.9890);">7</span>
<span class="t" style="left:1406.48px;top:1171.40px;font-size:32px;line-height:36px;color:#505050;transform:scaleX(0.9707);">8</span>
<span class="t" style="left:1696.12px;top:1171.40px;font-size:32px;line-height:36px;color:#505050;transform:scaleX(0.9730);">9</span>
<span class="t" style="left:1987.65px;top:1171.40px;font-size:32px;line-height:36px;color:#505050;transform:scaleX(0.9774);">10</span>
</main>
<section id="dialog" role="dialog" aria-label="Neuen Ordner erstellen">
<div class="b" style="left:593px;top:614px;width:648px;height:834px;background:#FFFFFF;box-sizing:border-box;border:2px solid #7C7C7C;box-shadow:0 5px 30px rgba(0,0,0,0.37);"></div>
<div class="b" style="left:596px;top:680px;width:642px;height:765px;background:#F0F0F0;"></div>
<span class="t" style="left:609.76px;top:633.80px;font-size:26.5px;line-height:30px;color:#000000;transform:scaleX(0.9766);">Neuen Ordner erstellen</span>
<svg class="b" style="left:1191px;top:635px;" width="23" height="23" viewBox="0 0 23 23"><path d="M1.2 1.2L21.8 21.8M21.8 1.2L1.2 21.8" fill="none" stroke="#1A1A1A" stroke-width="1.7"/></svg>
<span class="t" style="left:605.89px;top:701.20px;font-size:22px;line-height:25px;color:#000000;transform:scaleX(1.0509);">Name:</span>
<div class="b" style="left:606px;top:733px;width:621px;height:45px;background:#FFFFFF;box-sizing:border-box;border:2px solid #B6B9BF;"></div>
<span class="t" style="left:614.06px;top:742.50px;font-size:22px;line-height:25px;color:#000000;transform:scaleX(1.0203);">testkalender</span>
<div class="b" style="left:738px;top:738.5px;width:1.6px;height:29px;background:#000;"></div>
<span class="t" style="left:606.92px;top:809.50px;font-size:22px;line-height:25px;color:#000000;transform:scaleX(1.0346);">Ordner enthält Elemente des Typs:</span>
<div class="b" style="left:606px;top:842px;width:621px;height:43px;background:#FFFFFF;box-sizing:border-box;border:2px solid #B6B9BF;"></div>
<span class="t" style="left:613.12px;top:850.60px;font-size:22px;line-height:25px;color:#000000;transform:scaleX(1.0336);">Kalender</span>
<div class="b" style="left:1187px;top:845.2px;width:36.4px;height:36.2px;background:#E1E1E1;box-sizing:border-box;border:1.3px solid #ADADAD;"></div>
<svg class="b" style="left:1196px;top:858px;" width="18" height="11" viewBox="0 0 18 11"><path d="M1.4 1.4L9 9L16.6 1.4" fill="none" stroke="#5A5A5A" stroke-width="2.1"/></svg>
<span class="t" style="left:606.89px;top:916.20px;font-size:22px;line-height:25px;color:#000000;transform:scaleX(1.0634);">Ordner soll angelegt werden unter:</span>
<div class="b" style="left:606px;top:948px;width:621px;height:403px;background:#FFFFFF;box-sizing:border-box;border:2px solid #A0A3AA;"></div>
<div class="b" style="left:1189px;top:952px;width:34px;height:395px;background:#F0F0F0;"></div>
<div class="b" style="left:1189px;top:1034px;width:33px;height:168px;background:#CDCDCD;"></div>
<svg class="b" style="left:1195.6px;top:963px;" width="19" height="14" viewBox="0 0 19 14"><path d="M1.8 12L9.5 3.6L17.2 12" fill="none" stroke="#505050" stroke-width="3.2"/></svg>
<svg class="b" style="left:1195.6px;top:1322.4px;" width="19" height="14" viewBox="0 0 19 14"><path d="M1.8 2L9.5 10.4L17.2 2" fill="none" stroke="#505050" stroke-width="3.2"/></svg>
<div class="b" style="left:692.6px;top:1232.9px;width:383.6px;height:34.2px;background:#D9D9D9;"></div>
<svg class="b" style="left:697.1px;top:953.4px;" width="34" height="35" viewBox="0 0 34 35"><path d="M0.4 5.6 H14.4 L18.6 0.4 H30 Q31.6 0.4 31.6 2 V12 H3.6 V28.8 H0.4 Z" fill="#DDB77B"/><path d="M20.4 3.8 L22 2 H29 Q29.8 2 29.8 3.8 Z" fill="#F4F4F6"/><rect x="6" y="14.8" width="27" height="18.2" fill="#EFEFEF" stroke="#C4C4C6" stroke-width="1.5"/><path d="M12.5 23.4h10M12.5 27.4h8" stroke="#B5B5B5" stroke-width="1.5" fill="none"/><circle cx="28" cy="19.6" r="1.7" fill="#1E5DBE"/></svg>
<span class="t" style="left:740.09px;top:958.60px;font-size:22px;line-height:25px;color:#000000;transform:scaleX(1.0066);">Gesendete Elemente</span>
<svg class="b" style="left:697.0px;top:988.7px;" width="34" height="35" viewBox="0 0 34 35"><path d="M4.6 5.2 L7.4 28.6 Q7.6 30.4 9.6 30.8 Q15.5 32 21.4 30.8 Q23.4 30.4 23.6 28.6 L26.4 5.2" fill="#F4F4F4" stroke="#6E6E6E" stroke-width="1.7"/><ellipse cx="15.5" cy="4.6" rx="11.6" ry="3.6" fill="#FAFAFA" stroke="#6E6E6E" stroke-width="1.7"/><g fill="none" stroke="#4DA882" stroke-width="1.9"><path d="M12.2 16.4 L15.5 12.4 L18.8 16.4"/><path d="M20.4 18.6 L21.6 22.6 L17.2 23.2"/><path d="M13.8 23.2 L9.4 22.6 L10.6 18.6"/></g></svg>
<span class="t" style="left:740.01px;top:993.57px;font-size:22px;line-height:25px;color:#000000;font-weight:700;transform:scaleX(1.0073);">Gelöschte Elemente</span>
<svg class="b" style="left:697.1px;top:1023.0px;" width="34" height="35" viewBox="0 0 34 35"><path d="M0.4 7.6 H14.4 L18.6 2.4 H30 Q31.6 2.4 31.6 4.0 V30.3 H0.4 Z" fill="#DDB77B"/><path d="M20.4 5.8 L22 4.0 H29 Q29.8 4.0 29.8 5.8 Z" fill="#F4F4F6"/></svg>
<span class="t" style="left:740.75px;top:1028.54px;font-size:22px;line-height:25px;color:#000000;transform:scaleX(0.9844);">Archive</span>
<svg class="b" style="left:697.1px;top:1057.2px;" width="34" height="35" viewBox="0 0 34 35"><rect x="2.4" y="4.8" width="27.2" height="28.8" rx="2" fill="#DDB77B"/><rect x="6.6" y="8.6" width="18.8" height="21.2" fill="#F1F1F3"/><path d="M7.2 8.2 Q7.6 4.6 11.6 4.6 H20.4 Q24.4 4.6 24.8 8.2 Z" fill="#666"/><circle cx="16" cy="3.6" r="2.5" fill="#fff" stroke="#666" stroke-width="1.5"/><path d="M8.6 19.6 L13.2 24.4 L22.6 12.6" fill="none" stroke="#D9482B" stroke-width="2.4"/></svg>
<span class="t" style="left:740.74px;top:1063.51px;font-size:22px;line-height:25px;color:#000000;transform:scaleX(1.0501);">Aufgaben (Nur dieser Computer)</span>
<svg class="b" style="left:697.1px;top:1093.0px;" width="34" height="35" viewBox="0 0 34 35"><path d="M0.4 7.6 H14.4 L18.6 2.4 H30 Q31.6 2.4 31.6 4.0 V30.3 H0.4 Z" fill="#DDB77B"/><path d="M20.4 5.8 L22 4.0 H29 Q29.8 4.0 29.8 5.8 Z" fill="#F4F4F6"/></svg>
<span class="t" style="left:739.38px;top:1098.48px;font-size:22px;line-height:25px;color:#000000;transform:scaleX(1.0055);">Entwürfe</span>
<svg class="b" style="left:697.1px;top:1129.2px;" width="34" height="35" viewBox="0 0 34 35"><rect x="3" y="1.4" width="24" height="29.6" rx="1.5" fill="#F0F0F0" stroke="#BDBDBD" stroke-width="1.5"/><path d="M2.6 5 l-2 2.2 l2 2.2 l-2 2.2 l2 2.2 l-2 2.2 l2 2.2 l-2 2.2 l2 2.2 l-2 2.2 l2 2.2" fill="none" stroke="#7A7A7A" stroke-width="1.1"/><rect x="9.4" y="8.4" width="13.6" height="6" fill="#4F9A7C"/><circle cx="24.6" cy="24.8" r="7.6" fill="#F7F7F7" stroke="#5B8FD6" stroke-width="2.2"/><path d="M24 20.6 V25.6 H28" fill="none" stroke="#555" stroke-width="1.7"/></svg>
<span class="t" style="left:740.86px;top:1133.45px;font-size:22px;line-height:25px;color:#000000;transform:scaleX(1.0451);">Journal (Nur dieser Computer)</span>
<svg class="b" style="left:697.1px;top:1164.9px;" width="34" height="35" viewBox="0 0 34 35"><path d="M0.4 5.6 H14.4 L18.6 0.4 H30 Q31.6 0.4 31.6 2 V8 H3 V27.6 H0.4 Z" fill="#DDB77B"/><path d="M20.4 3.8 L22 2 H29 Q29.8 2 29.8 3.8 Z" fill="#F4F4F6"/><rect x="4.6" y="10.6" width="26" height="17.8" fill="#F0F0F0" stroke="#BEBEBE" stroke-width="1.5"/><path d="M10.6 19.4h5M10.6 23.4h5" stroke="#9A9A9A" stroke-width="1.5" stroke-dasharray="2 1.2" fill="none"/><circle cx="24.6" cy="24" r="7.4" fill="#fff" stroke="#D2512E" stroke-width="2.6"/><path d="M19.6 19 L29.6 29" stroke="#D2512E" stroke-width="2.6"/></svg>
<span class="t" style="left:740.89px;top:1168.42px;font-size:22px;line-height:25px;color:#000000;transform:scaleX(0.9297);">Junk</span>
<svg class="b" style="left:697.1px;top:1198.5px;" width="34" height="35" viewBox="0 0 34 35"><path d="M0.4 7.6 H14.4 L18.6 2.4 H30 Q31.6 2.4 31.6 4.0 V30.3 H0.4 Z" fill="#DDB77B"/><path d="M20.4 5.8 L22 4.0 H29 Q29.8 4.0 29.8 5.8 Z" fill="#F4F4F6"/></svg>
<span class="t" style="left:740.87px;top:1203.39px;font-size:22px;line-height:25px;color:#000000;transform:scaleX(1.0049);">Junk-E-Mail</span>
<svg class="b" style="left:697.1px;top:1236.3px;" width="34" height="35" viewBox="0 0 34 35"><rect x="0" y="0" width="29.4" height="27.4" fill="#C3C3C3"/><rect x="0" y="0" width="29.4" height="5.6" fill="#BDBDBD"/><rect x="1.6" y="7.6" width="5" height="4.8" fill="#FBFBFB"/><rect x="8.6" y="7.6" width="5" height="4.8" fill="#FBFBFB"/><rect x="15.6" y="7.6" width="5" height="4.8" fill="#FBFBFB"/><rect x="22.8" y="7.6" width="5" height="4.8" fill="#FBFBFB"/><rect x="1.6" y="14.4" width="5" height="4.8" fill="#FBFBFB"/><rect x="8.6" y="14.4" width="5" height="4.8" fill="#FBFBFB"/><rect x="15.6" y="14.4" width="5" height="4.8" fill="#FBFBFB"/><rect x="22.8" y="14.4" width="5" height="4.8" fill="#FBFBFB"/><rect x="1.6" y="21.2" width="5" height="4.8" fill="#FBFBFB"/><rect x="8.6" y="21.2" width="5" height="4.8" fill="#FBFBFB"/><rect x="15.6" y="21.2" width="5" height="4.8" fill="#FBFBFB"/><rect x="22.8" y="21.2" width="5" height="4.8" fill="#FBFBFB"/><rect x="12.6" y="10.8" width="11.4" height="11.4" fill="#F4FBFF"/><rect x="14.8" y="13" width="7" height="7" rx="0.8" fill="#F4FBFF" stroke="#E36C0A" stroke-width="2.1"/></svg>
<span class="t" style="left:739.29px;top:1238.36px;font-size:22px;line-height:25px;color:#000000;transform:scaleX(1.0537);">Kalender (Nur dieser Computer)</span>
<svg class="b" style="left:738.0px;top:1271.3px;" width="34" height="35" viewBox="0 0 34 35"><rect x="0" y="0" width="29.4" height="27.4" fill="#C3C3C3"/><rect x="0" y="0" width="29.4" height="5.6" fill="#BDBDBD"/><rect x="1.6" y="7.6" width="5" height="4.8" fill="#FBFBFB"/><rect x="8.6" y="7.6" width="5" height="4.8" fill="#FBFBFB"/><rect x="15.6" y="7.6" width="5" height="4.8" fill="#FBFBFB"/><rect x="22.8" y="7.6" width="5" height="4.8" fill="#FBFBFB"/><rect x="1.6" y="14.4" width="5" height="4.8" fill="#FBFBFB"/><rect x="8.6" y="14.4" width="5" height="4.8" fill="#FBFBFB"/><rect x="15.6" y="14.4" width="5" height="4.8" fill="#FBFBFB"/><rect x="22.8" y="14.4" width="5" height="4.8" fill="#FBFBFB"/><rect x="1.6" y="21.2" width="5" height="4.8" fill="#FBFBFB"/><rect x="8.6" y="21.2" width="5" height="4.8" fill="#FBFBFB"/><rect x="15.6" y="21.2" width="5" height="4.8" fill="#FBFBFB"/><rect x="22.8" y="21.2" width="5" height="4.8" fill="#FBFBFB"/><rect x="12.6" y="10.8" width="11.4" height="11.4" fill="#F4FBFF"/><rect x="14.8" y="13" width="7" height="7" rx="0.8" fill="#F4FBFF" stroke="#E36C0A" stroke-width="2.1"/></svg>
<span class="t" style="left:780.62px;top:1273.33px;font-size:22px;line-height:25px;color:#000000;transform:scaleX(1.0507);">e-kal (Nur dieser Computer)</span>
<svg class="b" style="left:738.0px;top:1306.3px;" width="34" height="35" viewBox="0 0 34 35"><rect x="0" y="0" width="29.4" height="27.4" fill="#C3C3C3"/><rect x="0" y="0" width="29.4" height="5.6" fill="#BDBDBD"/><rect x="1.6" y="7.6" width="5" height="4.8" fill="#FBFBFB"/><rect x="8.6" y="7.6" width="5" height="4.8" fill="#FBFBFB"/><rect x="15.6" y="7.6" width="5" height="4.8" fill="#FBFBFB"/><rect x="22.8" y="7.6" width="5" height="4.8" fill="#FBFBFB"/><rect x="1.6" y="14.4" width="5" height="4.8" fill="#FBFBFB"/><rect x="8.6" y="14.4" width="5" height="4.8" fill="#FBFBFB"/><rect x="15.6" y="14.4" width="5" height="4.8" fill="#FBFBFB"/><rect x="22.8" y="14.4" width="5" height="4.8" fill="#FBFBFB"/><rect x="1.6" y="21.2" width="5" height="4.8" fill="#FBFBFB"/><rect x="8.6" y="21.2" width="5" height="4.8" fill="#FBFBFB"/><rect x="15.6" y="21.2" width="5" height="4.8" fill="#FBFBFB"/><rect x="22.8" y="21.2" width="5" height="4.8" fill="#FBFBFB"/><rect x="12.6" y="10.8" width="11.4" height="11.4" fill="#F4FBFF"/><rect x="14.8" y="13" width="7" height="7" rx="0.8" fill="#F4FBFF" stroke="#E36C0A" stroke-width="2.1"/></svg>
<span class="t" style="left:780.11px;top:1308.30px;font-size:22px;line-height:25px;color:#000000;transform:scaleX(1.0421);">Ksalk (Nur dieser Computer)</span>
<span class="t" style="left:960.86px;top:993.57px;font-size:22px;line-height:25px;color:#3A32E6;transform:scaleX(0.9752);">(3)</span>
<svg class="b" style="left:666px;top:995px;" width="15" height="21" viewBox="0 0 15 21"><path d="M2.2 1.8L12.4 10.4L2.2 19" fill="none" stroke="#A0A0A0" stroke-width="2.7"/></svg>
<svg class="b" style="left:661.4px;top:1243.6px;" width="22" height="14.4" viewBox="0 0 22 14.4"><path d="M1.8 2L11 11.4L20.2 2" fill="none" stroke="#303030" stroke-width="3.1"/></svg>
<svg class="b" style="left:695px;top:1342.4px;overflow:hidden;" width="35" height="7.4" viewBox="0 0 35 7.4"><rect x="1.4" y="1" width="32" height="26" rx="2.5" fill="#fff" stroke="#555" stroke-width="1.7"/><rect x="9" y="3.8" width="5" height="1.8" fill="#9CC3F0"/></svg>
<div class="b" style="left:668.4px;top:1346.4px;width:4px;height:1.4px;background:#BDBDBD;"></div>
<div class="b" style="left:801.6px;top:1347px;width:2px;height:2px;background:#6A6A6A;"></div>
<div class="b" style="left:900.2px;top:1347px;width:2px;height:2px;background:#6A6A6A;"></div>
<div class="b" style="left:906.4px;top:1347px;width:2px;height:2px;background:#6A6A6A;"></div>
<div class="b" style="left:901px;top:1379px;width:151px;height:50px;background:#E1E1E1;box-sizing:border-box;border:3px solid #0078D7;"></div>
<span class="t" style="left:960.99px;top:1393.30px;font-size:22px;line-height:25px;color:#000000;transform:scaleX(0.9649);">OK</span>
<div class="b" style="left:1074px;top:1379px;width:151px;height:50px;background:#E1E1E1;box-sizing:border-box;border:2px solid #B4B4B4;"></div>
<span class="t" style="left:1094.54px;top:1393.30px;font-size:22px;line-height:25px;color:#000000;transform:scaleX(1.0387);">Abbrechen</span>
</section>
</body>
</html>
